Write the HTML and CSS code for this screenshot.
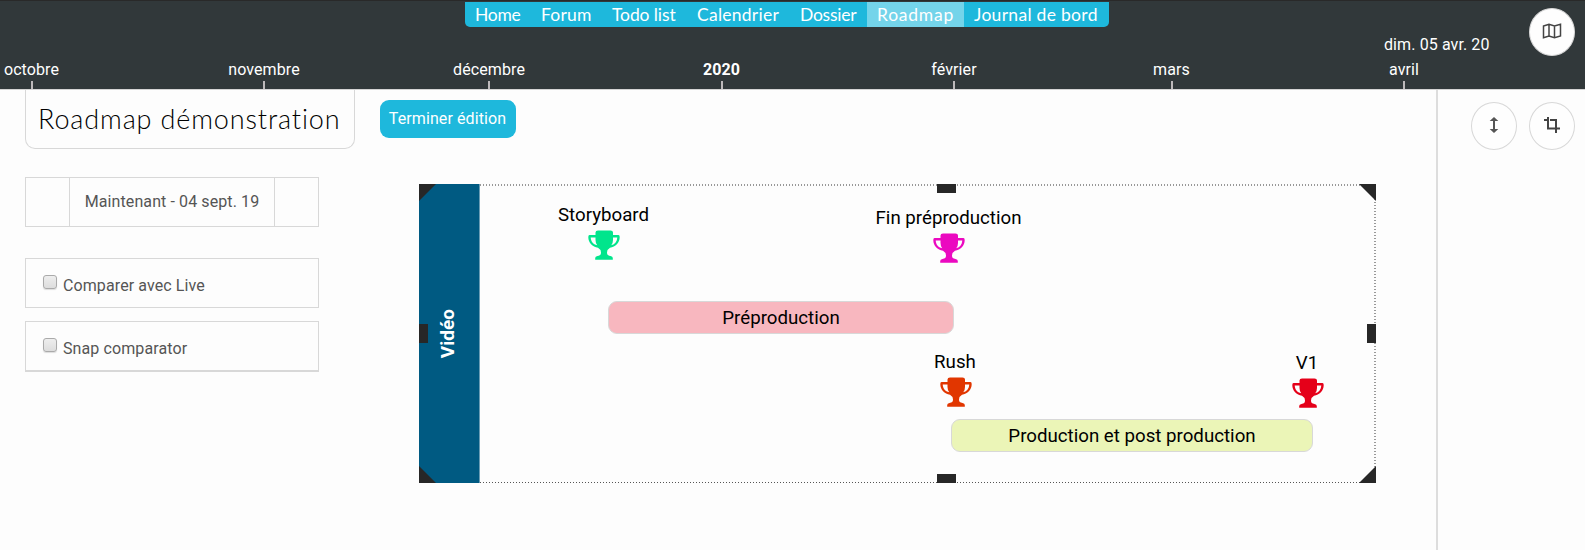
FILE: index.html
```html
<!DOCTYPE html>
<html lang="fr">
<head>
<meta charset="utf-8">
<title>Roadmap démonstration</title>
<link rel="stylesheet" href="styles.css">
</head>
<body>
<svg class="sprite" width="0" height="0" aria-hidden="true">
  <symbol id="trophy" viewBox="0 0 32 30">
    <path fill="currentColor" d="M7.500 2.500Q7.500 .5 10 .5H22.500Q25 .5 25 2.500V5H30.500Q31.700 5 31.700 7C31.700 13 27.500 17 22 17.800Q19 19.500 19 22.500C19 25 20 25.500 22.500 26Q24.800 26.500 24.800 28V29.700H7.200V28Q7.200 26.500 9.500 26C12 25.500 13 25 13 22.500Q13 19.500 10 17.800C4.500 17 .3 13 .3 7Q.3 5 1.500 5H7.500ZM7.500 7.500H2.700C3 11.500 5 14.200 9.200 15.300Q7.500 13 7.500 10ZM25 7.500V10Q25 13 23.300 15.300C27 14.200 29.100 11.500 29.300 7.500Z"/>
  </symbol>
</svg>
<header class="topbar">
  <nav class="nav">
    <a class="home">Home</a><a class="forum">Forum</a><a class="todo">Todo list</a><a class="calendar">Calendrier</a><a class="folder">Dossier</a><a class="roadmap active">Roadmap</a><a class="journal">Journal de bord</a>
  </nav>
  <div class="cursor-date">dim. 05 avr. 20</div>
  <div class="months">
    <div class="month"><span>octobre</span><i></i></div>
    <div class="month"><span>novembre</span><i></i></div>
    <div class="month"><span>décembre</span><i></i></div>
    <div class="month year"><span>2020</span><i></i></div>
    <div class="month"><span>février</span><i></i></div>
    <div class="month"><span>mars</span><i></i></div>
    <div class="month"><span>avril</span><i></i></div>
  </div>
  <button class="round map" aria-label="Carte">
    <svg width="20" height="16" viewBox="0 0 20 16" fill="none" stroke="#444" stroke-width="1.500"><path d="M1.500 3 7 1.200 12.500 3 18.500 1.200V13L12.500 14.800 7 13 1.500 14.800ZM7 1.200V13M12.500 3V14.800"/></svg>
  </button>
</header>
<main class="page">
  <aside class="side">
    <h1 class="title">Roadmap démonstration</h1>
    <div class="date-picker"><span></span><span class="date">Maintenant - 04 sept. 19</span><span></span></div>
    <label class="option"><input type="checkbox">Comparer avec Live</label>
    <label class="option snap"><input type="checkbox">Snap comparator</label>
  </aside>
  <section class="workspace">
    <button class="finish">Terminer édition</button>
    <div class="board">
      <div class="lane"><span>Vidéo</span></div>
      <div class="milestone storyboard"><span>Storyboard</span><svg><use href="#trophy"/></svg></div>
      <div class="milestone fin"><span>Fin préproduction</span><svg><use href="#trophy"/></svg></div>
      <div class="milestone rush"><span>Rush</span><svg><use href="#trophy"/></svg></div>
      <div class="milestone v1"><span>V1</span><svg><use href="#trophy"/></svg></div>
      <div class="task pre">Préproduction</div>
      <div class="task prod">Production et post production</div>
      <b class="corner nw"></b><b class="corner ne"></b><b class="corner sw"></b><b class="corner se"></b>
      <b class="grip n"></b><b class="grip s"></b><b class="grip w"></b><b class="grip e"></b>
    </div>
  </section>
  <aside class="tools">
    <button class="round" aria-label="Hauteur">
      <svg width="10" height="18" viewBox="0 0 10 18"><path d="M5 1 9.300 5H.7ZM5 17 9.300 13H.7Z" fill="#555"/><path d="M5 4V14" stroke="#555" stroke-width="2"/></svg>
    </button>
    <button class="round" aria-label="Rogner">
      <svg width="18" height="18" viewBox="0 0 18 18" fill="none" stroke="#444" stroke-width="2"><path d="M1 4H4M7 4H13V17M5 1V12.500H17"/></svg>
    </button>
  </aside>
</main>
</body>
</html>
```
FILE: styles.css
```css
* { box-sizing: border-box; }
body { margin: 0; width: 1585px; height: 550px; overflow: hidden; background: #fdfdfd; font: 16px/20px Roboto, sans-serif; letter-spacing: .1px; color: #000; }
.sprite { position: absolute; }
button { padding: 0; font: inherit; letter-spacing: inherit; }

.topbar { position: relative; height: 90px; background: #31383a; border-top: 1px solid #292929; border-bottom: 1px solid #d4d4d4; color: #fff; display: flex; flex-direction: column; align-items: flex-start; }
.nav { display: flex; height: 25px; margin: 1px 0 0 465px; width: 644px; overflow: hidden; border-radius: 0 0 5px 5px; background: #1eb8dc; font: 17.500px/26px Lato, sans-serif; letter-spacing: 0; }
.nav a { flex: none; padding-left: 10px; white-space: nowrap; }
.nav .home { width: 66px; letter-spacing: -.3px; }
.nav .forum { width: 71px; letter-spacing: .2px; }
.nav .todo { width: 85px; letter-spacing: -.1px; }
.nav .calendar { width: 103px; letter-spacing: .25px; }
.nav .folder { width: 77px; letter-spacing: -.25px; }
.nav .roadmap { width: 97px; letter-spacing: .75px; }
.nav .journal { width: 145px; letter-spacing: .3px; }
.nav .active { background: #74d4ea; }
.cursor-date { margin: 8px 0 0 1384px; height: 25px; line-height: 20px; }
.months { display: grid; grid-template-columns: 31.500px 232.500px 225px 232.500px 232.500px 217.500px 232.500px; }
.month { width: 0; justify-self: end; display: flex; flex-direction: column; align-items: center; white-space: nowrap; }
.month i { width: 2px; height: 8px; margin-top: 1px; background: #bdb9bb; }
.year { font-weight: 700; }

.round { width: 46px; height: 48px; border: 1px solid #d8d8d8; border-radius: 50%; background: #fefefe; display: flex; align-items: center; justify-content: center; }
.round svg { margin-bottom: 2px; }
.map { position: absolute; left: 1529px; top: 7px; }

.page { display: flex; height: 460px; }
.side { width: 355px; padding-left: 25px; }
.title { width: 330px; height: 59px; margin: 0; padding-left: 12px; border: 1px solid #d8d8d8; border-top: 0; border-radius: 0 0 10px 10px; font: 300 27px/57px Lato, sans-serif; letter-spacing: .87px; font-variant-ligatures: none; white-space: nowrap; }
.date-picker { width: 294px; height: 50px; margin-top: 28px; border: 1px solid #d8d8d8; display: grid; grid-template-columns: 43px 206px 43px; color: #555; line-height: 48px; text-align: center; }
.date { border: solid #d8d8d8; border-width: 0 1px; }
.option { width: 294px; height: 50px; margin-top: 31px; padding-left: 17px; border: 1px solid #d8d8d8; display: flex; align-items: flex-start; color: #555; line-height: 54px; }
.snap { height: 51px; margin-top: 13px; border-bottom-width: 2px; }
.option input { appearance: none; width: 14px; height: 14px; margin: 16px 6px 0 0; border: 1px solid #aaa; border-radius: 3px; background: linear-gradient(#eee, #ddd); box-shadow: 0 1px 1px #ddd; }

.workspace { width: 1083px; border-right: 2px solid #ddd; padding: 10px 0 0 25px; }
.finish { display: block; width: 136px; height: 38px; border: 0; border-radius: 9px; background: #1eb8dc; color: #fff; padding-right: 1px; }
.board { position: relative; width: 957px; height: 299px; margin: 46px 0 0 39px; border: 1px solid transparent; font-size: 18.700px; letter-spacing: 0; }
.board::before {
  content: ""; position: absolute; inset: -1px -1px -1px 60px;
  background:
    repeating-linear-gradient(90deg, #999 0 1px, transparent 1px 3px) top / 100% 2px no-repeat,
    repeating-linear-gradient(90deg, #555 0 1px, transparent 1px 3px) bottom / 100% 1px no-repeat,
    repeating-linear-gradient(#999 0 1px, transparent 1px 3px) right / 2px 100% no-repeat;
}
.lane { width: 61px; height: 299px; margin: -1px; background: #005a82; border-right: 1px solid #6a9db5; display: flex; align-items: center; justify-content: center; color: #fff; font-weight: 700; }
.lane span { writing-mode: vertical-rl; transform: rotate(180deg); margin-right: 3px; font-size: 19px; }
.milestone { position: absolute; width: 150px; display: flex; flex-direction: column; align-items: center; line-height: 22px; white-space: nowrap; }
.milestone svg { width: 32px; height: 30px; margin: 4px 0 0 1px; }
.storyboard { left: 108.500px; top: 19px; } .storyboard svg { color: #00e58c; }
.fin { left: 453.500px; top: 22px; } .fin svg { color: #eb09c0; }
.rush { left: 460px; top: 166px; } .rush svg { color: #e13600; }
.v1 { left: 812px; top: 167px; } .v1 svg { color: #e50019; }
.task { position: absolute; height: 33px; border: 1px solid #d8d8d8; border-radius: 9px; line-height: 32px; text-align: center; }
.pre { left: 188px; top: 116px; width: 346px; background: #f8b7bf; }
.prod { left: 531px; top: 234px; width: 362px; background: #ebf5b7; }
.corner { position: absolute; width: 17px; height: 17px; background: #272727; }
.nw { left: -1px; top: -1px; clip-path: polygon(0 0, 100% 0, 0 100%); }
.ne { right: -1px; top: -1px; clip-path: polygon(0 0, 100% 0, 100% 100%); }
.sw { left: -1px; bottom: -1px; clip-path: polygon(0 0, 100% 100%, 0 100%); }
.se { right: -1px; bottom: -1px; clip-path: polygon(100% 0, 100% 100%, 0 100%); }
.grip { position: absolute; background: #272727; }
.n, .s { left: 517px; width: 19px; height: 9px; }
.n { top: -1px; } .s { bottom: -1px; }
.w, .e { top: 139px; width: 9px; height: 19px; }
.w { left: -1px; } .e { right: -1px; }

.tools { display: flex; gap: 12px; padding: 12px 0 0 33px; }
```
